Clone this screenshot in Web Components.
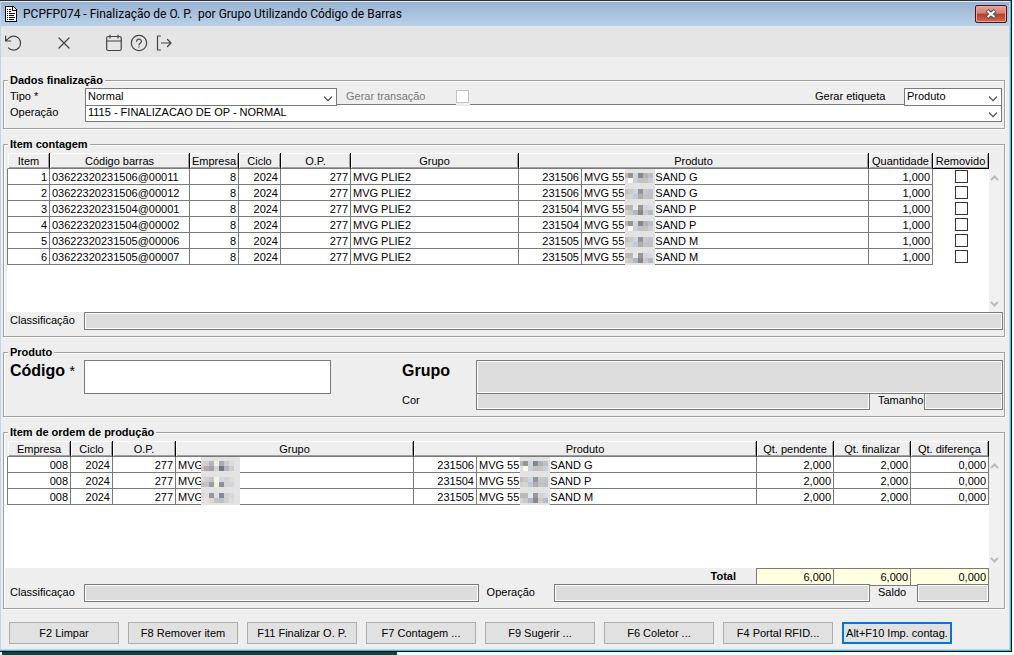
<!DOCTYPE html>
<html lang="pt-BR">
<head>
<meta charset="utf-8">
<meta name="viewport" content="width=device-width, initial-scale=1">
<title>PCPFP074</title>
<style>
  body {
    margin: 0;
    min-height: 100vh;
    display: flex;
    flex-direction: column;
    background: #fff;
    color: #000;
    font: 11px/16px "Liberation Sans", Arial, sans-serif;
    --line: #7a7a7a;
    --label: 74px;
  }
  .task-strip { height: 3px; width: 39%; margin-left: 2px; background: #2c393b; }
  .row { display: flex; position: relative; padding: 0 1px 0 6px; }
  .row.top { margin-bottom: -2px; z-index: 1; }
  .header-fields { --label: 75px; }
  .header-fields .row { padding-right: 2px; }
  .grow { flex: 1; }
  .etiqueta { margin-left: auto; --label: 89px; --box: 98px; }
  .tipo { --box: 252px; }
  .transacao { margin-left: 9px; --label: 110px; }
  .product { display: grid; grid-template-columns: 321px 1fr; column-gap: 71px; padding: 0 1px 0 6px; }
  .product .row { padding: 0; gap: 8px; }
  .big { --box-height: 34px; --label-font: bold 16px/22px "Liberation Sans", Arial, sans-serif; }
  .tamanho { flex: 0 0 125px; --label: 46px; }
  .order .row { padding-right: 15px; gap: 8px; }
  .order .classificacao { flex: 55; }
  .order .operacao { flex: 45; --label: 67px; }
  .order .saldo { flex: 0 0 111px; --label: 39px; }
  #contagem { margin-left: 3px; --grid-height: 159px; }
  #ordem { --grid-height: 127px; --indent: 2px; margin-left: 1px; }
</style>
</head>
<body>

<app-window>
  <span slot="title">PCPFP074 - Finalização de O. P.&nbsp; por Grupo Utilizando Código de Barras</span>
  <tool-bar slot="toolbar"></tool-bar>

  <group-box class="header-fields" label="Dados finalização">
    <div class="row top">
      <form-field class="tipo" kind="select" label="Tipo *" value="Normal"></form-field>
      <form-field class="transacao" kind="check" label="Gerar transação" disabled></form-field>
      <form-field class="etiqueta" kind="select" label="Gerar etiqueta" value="Produto"></form-field>
    </div>
    <div class="row">
      <form-field class="grow" kind="select" label="Operação" value="1115 - FINALIZACAO DE OP - NORMAL"></form-field>
    </div>
  </group-box>

  <group-box label="Item contagem" style="--pad-top: 2px">
    <data-grid id="contagem"></data-grid>
    <div class="row">
      <form-field class="grow" kind="output" label="Classificação"></form-field>
    </div>
  </group-box>

  <group-box label="Produto">
    <div class="product">
      <form-field class="big" kind="text" label="Código" required></form-field>
      <div>
        <div class="row top"><form-field class="big grow" kind="output" label="Grupo"></form-field></div>
        <div class="row">
          <form-field class="grow" kind="output" label="Cor"></form-field>
          <form-field class="tamanho" kind="output" label="Tamanho"></form-field>
        </div>
      </div>
    </div>
  </group-box>

  <group-box class="order" label="Item de ordem de produção" style="--pad-top: 2px">
    <data-grid id="ordem"></data-grid>
    <total-row label="Total" values="6,000 6,000 0,000"></total-row>
    <div class="row">
      <form-field class="classificacao" kind="output" label="Classificaçao"></form-field>
      <form-field class="operacao" kind="output" label="Operação"></form-field>
      <form-field class="saldo" kind="output" label="Saldo"></form-field>
    </div>
  </group-box>

  <action-bar slot="actions">
    <action-button>F2 Limpar</action-button>
    <action-button>F8 Remover item</action-button>
    <action-button>F11 Finalizar O. P.</action-button>
    <action-button>F7 Contagem ...</action-button>
    <action-button>F9 Sugerir ...</action-button>
    <action-button>F6 Coletor ...</action-button>
    <action-button>F4 Portal RFID...</action-button>
    <action-button primary>Alt+F10 Imp. contag.</action-button>
  </action-bar>
</app-window>
<div class="task-strip"></div>

<script>
class AppWindow extends HTMLElement {
  constructor() {
    super();
    this.attachShadow({mode: 'open'}).innerHTML = `
    <style>
      :host {
        display: block;
        margin-right: 2px;
        border: solid #000;
        border-width: 1px 1px 1px 0;
        border-top-color: #2f2f38;
      }
      .frame { border: solid #2fc6ee; border-width: 0 1px 1px 0; }
      .inner {
        border: 1px solid #bdd3ee;
        border-top: 0;
        background: #eee;
      }
      header {
        display: flex;
        align-items: center;
        height: 24px;
        border-top: 1px solid #e4edf6;
        padding: 0 2px 0 4px;
        background: linear-gradient(#98b3d2, #b9d1ea);
        font: 12px/16px Roboto, "Open Sans", sans-serif;
      }
      h1 { flex: 1; margin: 0 0 0 6px; font: inherit; white-space: pre; }
      .close {
        display: flex;
        align-items: center;
        justify-content: center;
        width: 32px;
        height: 18px;
        padding: 0;
        border: 1px solid #43141a;
        border-radius: 2px;
        box-shadow: inset 0 0 0 1px #e6a79d;
        background: linear-gradient(#e6a297, #d6806f 45%, #b93d25 50%, #cf6b52);
      }
      main {
        display: flex;
        flex-direction: column;
        gap: 8px;
        padding: 16px 4px 13px 2px;
      }
    </style>
    <div class="frame"><div class="inner">
      <header>
        <svg width="12" height="16" viewBox="0 0 12 16" shape-rendering="crispEdges" aria-hidden="true">
          <path d="M0 0h8l4 4v12H0z" fill="#000"/>
          <path d="M1 1h6v4h4v10H1z" fill="#fff"/>
          <path d="M8 1l3 3H8z" fill="#fff"/>
          <path d="M2 3h1v1H2zM4 3h2v1H4zM2 5h1v1H2zM4 5h2v1H4zM2 7h1v1H2zM4 7h6v1H4zM2 9h1v1H2zM4 9h5v1H4zM2 11h1v1H2zM4 11h6v1H4zM2 13h1v1H2zM4 13h5v1H4z" fill="#000"/>
        </svg>
        <h1><slot name="title"></slot></h1>
        <button class="close" aria-label="Fechar">
          <svg width="12" height="10" viewBox="0 0 12 10">
            <path d="M2 1.5L10 8.5M10 1.5L2 8.5" stroke="#4b5163" stroke-width="4"/>
            <path d="M2.5 2L9.5 8M9.5 2L2.5 8" stroke="#fff" stroke-width="2"/>
          </svg>
        </button>
      </header>
      <slot name="toolbar"></slot>
      <main><slot></slot></main>
      <slot name="actions"></slot>
    </div></div>
    `;
  }
}

class ToolBar extends HTMLElement {
  constructor() {
    super();
    this.attachShadow({mode: 'open'}).innerHTML = `
    <style>
      :host {
        display: flex;
        align-items: center;
        gap: 5px;
        height: 31px;
        padding-left: 3px;
        background: #e5e5e5;
      }
      button {
        width: 20px;
        height: 20px;
        padding: 0;
        border: 0;
        background: none;
      }
      .apart { margin-right: 25px; }
      svg {
        display: block;
        fill: none;
        stroke: #444;
        stroke-width: 1.2;
        stroke-linecap: round;
        stroke-linejoin: round;
      }
    </style>
    <button class="apart" aria-label="Desfazer"><svg width="20" height="20"><path d="M1.600 4v5h5M1.900 8.800l2.300-2.200a7 7 0 1 1 .3 9.300"/></svg></button>
    <button class="apart" aria-label="Cancelar"><svg width="20" height="20"><path d="M5 6l10 10M15 6l-10 10"/></svg></button>
    <button aria-label="Calendário"><svg width="20" height="20"><rect x="2.700" y="4.500" width="14.500" height="14" rx="1.500"/><path d="M2.700 9h14.500M6 3v3M14 3v3"/></svg></button>
    <button aria-label="Ajuda"><svg width="20" height="20"><circle cx="10" cy="11" r="7.700"/><path d="M7.600 9.200a2.400 2.200 0 1 1 3.600 2c-.8.500-1.200.8-1.200 1.700M10 14.800v.3"/></svg></button>
    <button aria-label="Sair"><svg width="20" height="20"><path d="M6.500 4h-3v14h3M7.500 11h9.500M13.500 7.500l3.500 3.500-3.500 3.500"/></svg></button>
    `;
  }
}

class GroupBox extends HTMLElement {
  constructor() {
    super();
    this.attachShadow({mode: 'open'}).innerHTML = `
    <style>
      :host { display: block; }
      fieldset {
        min-width: 0;
        margin: 0;
        padding: var(--pad-top, 1px) 0 6px;
        border: 1px solid #a0a0a0;
        box-shadow: 1px 1px 0 #fff, inset 1px 1px 0 #fff;
      }
      legend {
        margin-left: 4px;
        padding: 0 2px;
        background: #eee;
        font-weight: bold;
        line-height: 14px;
      }
    </style>
    <fieldset><legend>${this.getAttribute('label')}</legend><slot></slot></fieldset>
    `;
  }
}

class FormField extends HTMLElement {
  constructor() {
    super();
    const label = this.getAttribute('label');
    const star = this.hasAttribute('required') ? ' <span>*</span>' : '';
    this.attachShadow({mode: 'open'}).innerHTML = `
    <style>
      :host { display: flex; min-width: 0; }
      :host([disabled]) { color: #7a7a7a; }
      label {
        flex: 0 0 var(--label);
        font: var(--label-font, inherit);
        white-space: nowrap;
      }
      label span { font-size: 14px; font-weight: normal; }
      .box { position: relative; flex: 1 0 var(--box, 0px); min-width: 0; }
      input, select {
        display: block;
        box-sizing: border-box;
        width: 100%;
        height: var(--box-height, 18px);
        margin: 0;
        padding: 0 2px 2px;
        border: 1px solid var(--line);
        border-radius: 0;
        outline: 0;
        background: #fff;
        color: inherit;
        font: inherit;
        line-height: 14px;
        appearance: none;
      }
      input[readonly] { background: #dcdcdc; box-shadow: inset 0 0 0 1px #fff; }
      .tick { flex: none; padding: 2px 1px 2px 0; background: #eee; }
      .tick input { width: 13px; height: 13px; padding: 0; border-color: #c4c4c4; }
      svg {
        position: absolute;
        right: 4px;
        top: 8px;
        fill: none;
        stroke: #444;
        stroke-width: 1.2;
        pointer-events: none;
      }
    </style>
    <label for="control">${label}${star}</label>
    ${this.control()}
    `;
  }

  control() {
    const value = this.getAttribute('value') || '';
    switch (this.getAttribute('kind')) {
      case 'select':
        return `<div class="box"><select id="control"><option>${value}</option></select>
          <svg width="10" height="6"><path d="M1 .7l4 4 4-4"/></svg></div>`;
      case 'check':
        return '<div class="tick"><input id="control" type="checkbox" disabled></div>';
      case 'output':
        return `<div class="box"><input id="control" readonly value="${value}"></div>`;
      default:
        return '<div class="box"><input id="control" type="text"></div>';
    }
  }
}

// Pixelated patch over a censored word, one row of colours per line of blocks.
class CensorBlock extends HTMLElement {
  constructor() {
    super();
    const wide = this.hasAttribute('wide');
    const width = wide ? 39 : 30;
    const sets = wide ? [
      ['d8d8dc d0ccd0 b8b4bc f0f0e0 a8acb8 c8ccd0 d8dcdc', 'c4c4cc b8aaac a8a0a8 d4d4cc 707684 b8b4bc c8ccd8'],
      ['dcdce0 d0d0d4 c8c4cc f4f4e4 d0d8e4 d4d4d4 dcdcdc', 'b8bcc4 c8c0c4 9c9ca8 f0f0e0 8890a0 d8d4d8 d0d4dc'],
      ['d4d8dc e4dcdc 9894a0 dce0e0 8488a0 d4d0d8 d8d8dc', 'dce0e4 ecdfe0 dcd8d4 c4c4c0 c0c0c0 d0d0d0 dcdcdc']
    ] : [
      ['c4b4b4 929890 ccd4e8 8a8886 b0b4ba bcc0c8', 'e8dce0 fdfde6 c8d0dc c0c4c8 ccc0bc c8d0dc'],
      ['ccb8b8 c8ccc0 ccd4e8 96969a c4c8d0 c0c4cc', 'd8ccd0 d4d8cc c0c8d8 b0acac c8c0bc bcc0c8'],
      ['c8b4b4 b8bcb0 e4e8f0 98989a d0d4dc d8dce0', 'dcd0d4 c8ccbc b0b8c8 8c8884 ccc8c8 b4bcc8']
    ];
    const rows = sets[this.getAttribute('tone') % 3];
    let rects = '';
    rows.forEach((row, y) => row.split(' ').forEach((c, x) => {
      const left = Math.max(0, x * 5 - 2);
      rects += `<rect x="${left}" y="${y * 5 + 4}" width="${x * 5 + 3 - left}" height="5" fill="#${c}"/>`;
    }));
    this.attachShadow({mode: 'open'}).innerHTML = `
    <style>
      :host { display: inline-block; vertical-align: top; height: 13px; margin-left: 1px; }
      :host([wide]) { margin-left: -2px; }
      svg { display: block; margin-top: -2px; }
    </style>
    <svg width="${width}" height="16" shape-rendering="crispEdges" aria-hidden="true">
      <rect width="${width}" height="16" fill="#e3e3e3"/>${rects}
    </svg>
    `;
  }
}

class DataGrid extends HTMLElement {
  constructor() {
    super();
    this.attachShadow({mode: 'open'}).innerHTML = `
    <style>
      :host { display: flex; height: var(--grid-height); }
      .view {
        flex: 1;
        min-width: 0;
        overflow: hidden;
        padding-left: var(--indent, 0px);
        background: linear-gradient(transparent 16px, #fff 16px);
      }
      table { width: 100%; table-layout: fixed; border-collapse: separate; border-spacing: 0; }
      th, td {
        box-sizing: border-box;
        height: 16px;
        padding: 2px 2px 0;
        line-height: 13px;
        white-space: nowrap;
      }
      th {
        padding: 2px 0 0;
        border-right: 1px solid #000;
        border-bottom: 1px solid var(--line);
        background: #eee;
        box-shadow: inset 1px 1px 0 #fff, inset -1px -1px 0 #a0a0a0;
        font-weight: normal;
      }
      td { border: solid var(--line); border-width: 0 1px 1px 0; text-align: left; }
      td:first-child { border-left-width: 1px; }
      th:first-child { border-left: 1px solid #eee; }
      td.num { text-align: right; }
      td.check { border: 0; padding: 1px 0 2px; }
      th.check { border-bottom-color: #000; }
      input {
        display: block;
        width: 13px;
        height: 13px;
        margin: 0 auto;
        border: 1px solid #333;
        background: #fff;
        appearance: none;
      }
      .scroll {
        display: flex;
        flex-direction: column;
        justify-content: space-between;
        width: 11px;
        margin: 15px 4px 0 0;
        padding: 7px 0 5px;
        box-sizing: border-box;
        background: #f0f0f0;
      }
      .scroll svg { display: block; margin: 0 auto; fill: none; stroke: #bbb; stroke-width: 2; }
    </style>
    <div class="view"><table><colgroup></colgroup><thead><tr></tr></thead><tbody></tbody></table></div>
    <div class="scroll">
      <svg width="9" height="6"><path d="M1 5l3.500-3.500L8 5"/></svg>
      <svg width="9" height="6"><path d="M1 1l3.500 3.500L8 1"/></svg>
    </div>
    `;
  }

  // columns: {title, width, span, kind}; a column without a title is covered by the span before it
  load(columns, rows) {
    const $ = (s) => this.shadowRoot.querySelector(s);
    $('colgroup').innerHTML = columns.map((c) => `<col${c.width ? ` style="width: ${c.width}px"` : ''}>`).join('');
    $('thead tr').innerHTML = columns.filter((c) => c.title).map((c) =>
      `<th scope="col" colspan="${c.span || 1}" class="${c.kind || ''}">${c.title}</th>`).join('');
    $('tbody').innerHTML = rows.map((row, i) => '<tr>' + columns.map((c, n) => {
      const cell = c.kind === 'check'
        ? `<input type="checkbox" aria-label="Removido ${i + 1}">`
        : row[n].replace('#', `<censor-block tone="${i}"></censor-block>`)
                .replace('%', `<censor-block wide tone="${i}"></censor-block>`);
      return `<td class="${c.kind || ''}">${cell}</td>`;
    }).join('') + '</tr>').join('');
  }
}

class TotalRow extends HTMLElement {
  constructor() {
    super();
    const cells = this.getAttribute('values').split(' ').map((v) => `<output>${v}</output>`).join('');
    this.attachShadow({mode: 'open'}).innerHTML = `
    <style>
      :host { display: flex; justify-content: flex-end; margin: 0 15px -2px 0; }
      b { margin-right: 20px; }
      output {
        box-sizing: border-box;
        width: 77px;
        height: 18px;
        padding-right: 2px;
        border: solid var(--line);
        border-width: 1px 1px 1px 0;
        background: #ffffe1;
        text-align: right;
      }
      output:first-of-type { width: 78px; border-left-width: 1px; }
      output:last-of-type { width: 78px; }
    </style>
    <b>${this.getAttribute('label')}</b>${cells}
    `;
  }
}

class ActionBar extends HTMLElement {
  constructor() {
    super();
    this.attachShadow({mode: 'open'}).innerHTML = `
    <style>
      :host { display: flex; flex-wrap: wrap; gap: 9px; padding: 0 8px 5px; }
    </style>
    <slot></slot>
    `;
  }
}

class ActionButton extends HTMLElement {
  constructor() {
    super();
    this.attachShadow({mode: 'open'}).innerHTML = `
    <style>
      :host { display: block; width: 110px; }
      button {
        display: block;
        width: 100%;
        height: 22px;
        padding: 0;
        border: 1px solid #adadad;
        background: #e1e1e1;
        color: inherit;
        font: inherit;
        white-space: nowrap;
      }
      :host([primary]) button { border: 2px solid #0078d7; }
    </style>
    <button><slot></slot></button>
    `;
  }
}

customElements.define('app-window', AppWindow);
customElements.define('tool-bar', ToolBar);
customElements.define('group-box', GroupBox);
customElements.define('form-field', FormField);
customElements.define('censor-block', CensorBlock);
customElements.define('data-grid', DataGrid);
customElements.define('total-row', TotalRow);
customElements.define('action-bar', ActionBar);
customElements.define('action-button', ActionButton);

document.querySelector('#contagem').load([
  {title: 'Item', width: 43, kind: 'num'},
  {title: 'Código barras', width: 140},
  {title: 'Empresa', width: 49, kind: 'num'},
  {title: 'Ciclo', width: 42, kind: 'num'},
  {title: 'O.P.', width: 70, kind: 'num'},
  {title: 'Grupo', width: 168},
  {title: 'Produto', width: 63, span: 2, kind: 'num'},
  {},
  {title: 'Quantidade', width: 64, kind: 'num'},
  {title: 'Removido', width: 56, kind: 'check'}
], [
  ['1', '03622320231506@00011', '8', '2024', '277', 'MVG PLIE2', '231506', 'MVG 55#SAND G', '1,000'],
  ['2', '03622320231506@00012', '8', '2024', '277', 'MVG PLIE2', '231506', 'MVG 55#SAND G', '1,000'],
  ['3', '03622320231504@00001', '8', '2024', '277', 'MVG PLIE2', '231504', 'MVG 55#SAND P', '1,000'],
  ['4', '03622320231504@00002', '8', '2024', '277', 'MVG PLIE2', '231504', 'MVG 55#SAND P', '1,000'],
  ['5', '03622320231505@00006', '8', '2024', '277', 'MVG PLIE2', '231505', 'MVG 55#SAND M', '1,000'],
  ['6', '03622320231505@00007', '8', '2024', '277', 'MVG PLIE2', '231505', 'MVG 55#SAND M', '1,000']
]);

document.querySelector('#ordem').load([
  {title: 'Empresa', width: 64, kind: 'num'},
  {title: 'Ciclo', width: 42, kind: 'num'},
  {title: 'O.P.', width: 63, kind: 'num'},
  {title: 'Grupo', width: 238},
  {title: 'Produto', width: 63, span: 2, kind: 'num'},
  {},
  {title: 'Qt. pendente', width: 77, kind: 'num'},
  {title: 'Qt. finalizar', width: 77, kind: 'num'},
  {title: 'Qt. diferença', width: 78, kind: 'num'}
], [
  ['008', '2024', '277', 'MVG%', '231506', 'MVG 55#SAND G', '2,000', '2,000', '0,000'],
  ['008', '2024', '277', 'MVG%', '231504', 'MVG 55#SAND P', '2,000', '2,000', '0,000'],
  ['008', '2024', '277', 'MVG%', '231505', 'MVG 55#SAND M', '2,000', '2,000', '0,000']
]);
</script>
</body>
</html>
